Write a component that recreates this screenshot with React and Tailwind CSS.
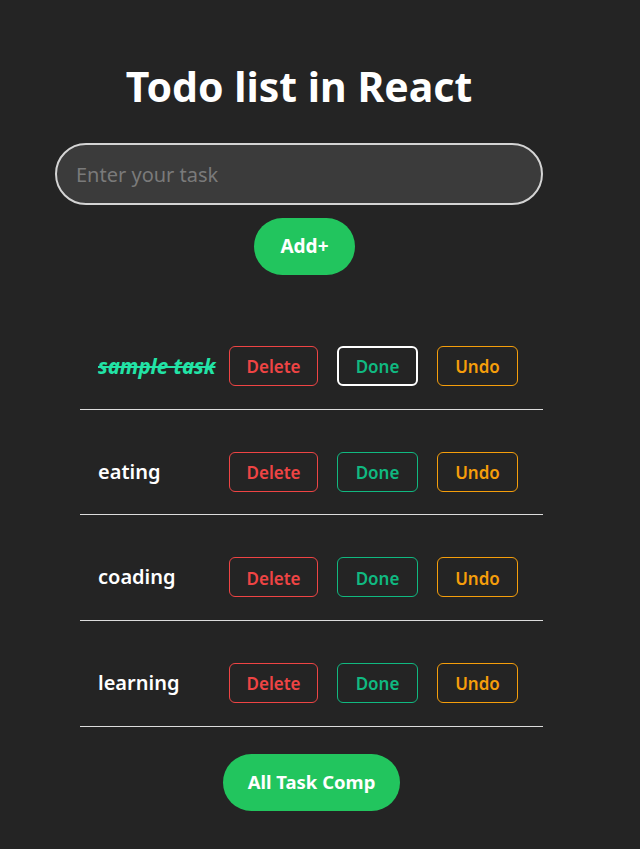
import React from "react";

const tasks = [
  { text: "sample task", done: true },
  { text: "eating" },
  { text: "coading" },
  { text: "learning" },
];

export default function App() {
  return (
    <div
      className="min-h-[849px] w-[640px] bg-[#242424] text-white"
      style={{ fontFamily: '"Noto Sans", "Open Sans", sans-serif' }}
    >
      <div className="w-[640px] flex flex-col">
        <h1 className="mt-[62px] ml-[116px] w-[366px] whitespace-nowrap text-center text-[41px] font-bold leading-[48px]">
          Todo list in React
        </h1>
        <input
          className="mt-[33px] ml-[55px] h-[62px] w-[488px] rounded-full border-2 border-[#d4d4d4] bg-[#3b3b3b] px-[19px] text-[20px] text-white outline-none placeholder:text-[#7a7a7a]"
          placeholder="Enter your task"
        />
        <div className="flex justify-center ml-[-31px] mt-[13px]">
          <button className="h-[57px] w-[101px] rounded-full bg-[#22c55e] text-[19px] font-bold text-white">
            Add+
          </button>
        </div>
        <div className="ml-[80px] w-[463px] mt-[29px]">
          {tasks.map((t, i) => (
            <div key={i} className="flex items-center border-b border-[#dcdcdc] pl-[18px] pt-[42px] pb-[22.7px]">
              <span
                className={
                  t.done
                    ? "w-[131px] text-[20.5px] font-bold italic line-through text-[#22e3a6]"
                    : "w-[131px] text-[20px] font-semibold text-white"
                }
              >
                {t.text}
              </span>
              <button className="h-[40px] w-[89px] rounded-[6px] border border-[#ef4444] pt-[2px] text-[17px] font-semibold text-[#ef4444]">
                Delete
              </button>
              <button
                className={
                  i === 0
                    ? "ml-[19px] h-[40px] w-[81px] rounded-[6px] border-2 border-white pt-[2px] text-[17px] font-semibold text-[#10b981]"
                    : "ml-[19px] h-[40px] w-[81px] rounded-[6px] border border-[#10b981] pt-[2px] text-[17px] font-semibold text-[#10b981]"
                }
              >
                Done
              </button>
              <button className="ml-[19px] h-[40px] w-[81px] rounded-[6px] border border-[#f59e0b] pt-[2px] text-[17px] font-semibold text-[#f59e0b]">
                Undo
              </button>
            </div>
          ))}
        </div>
        <div className="flex justify-center ml-[-17px] mt-[27px] pb-[38px]">
          <button className="h-[57px] w-[177px] rounded-full bg-[#22c55e] text-[18.5px] font-bold text-white">
            All Task Comp
          </button>
        </div>
      </div>
    </div>
  );
}
